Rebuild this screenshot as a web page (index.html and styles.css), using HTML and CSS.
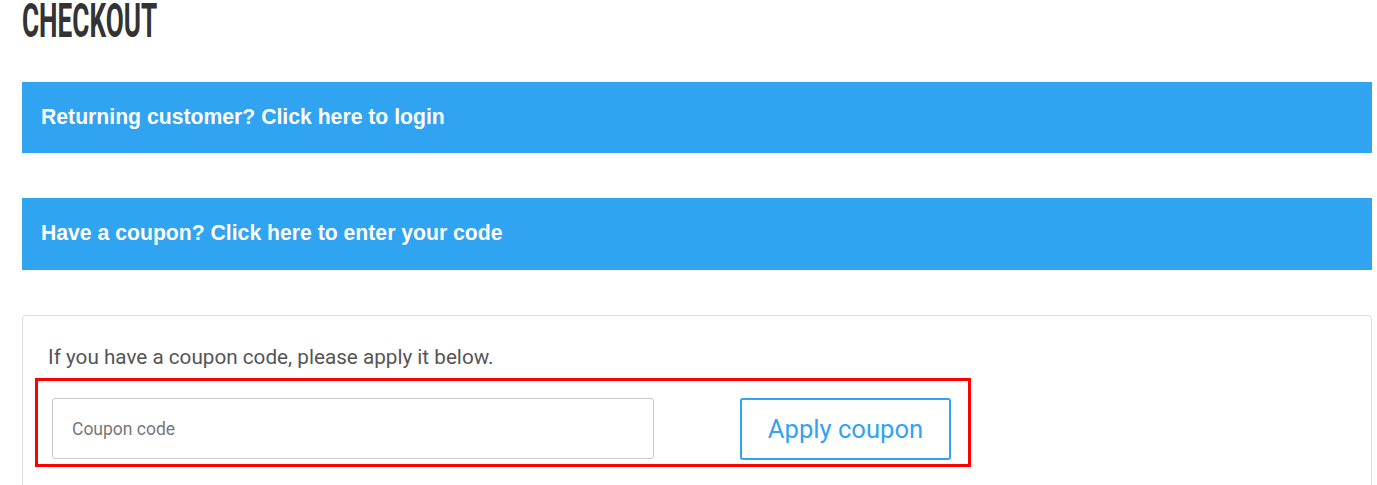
FILE: index.html
```html
<!DOCTYPE html>
<html>
<head>
<meta charset="utf-8">
<link rel="stylesheet" href="styles.css">
</head>
<body>
<div class="page">
  <div class="title-row"><h1 class="title">CHECKOUT</h1></div>
  <div class="notice">Returning customer? Click here to login</div>
  <div class="notice">Have a coupon? Click here to enter your code</div>
  <div class="coupon-box">
    <p class="hint">If you have a coupon code, please apply it below.</p>
    <div class="highlight">
      <input class="code-input" type="text" placeholder="Coupon code">
      <button class="apply-btn">Apply coupon</button>
    </div>
  </div>
</div>
</body>
</html>
```

FILE: styles.css
```css
html, body {
  margin: 0;
  padding: 0;
  background: #fff;
  overflow: hidden;
}
.page {
  width: 1350px;
  margin-left: 22px;
  font-family: "Liberation Sans", Arial, sans-serif;
}
.title-row {
  height: 82px;
}
.title {
  display: inline-block;
  margin: 0;
  font-family: Roboto, sans-serif;
  font-weight: bold;
  font-size: 48px;
  line-height: 42px;
  color: #333;
  transform: scaleX(0.545);
  transform-origin: left top;
  white-space: nowrap;
}
.notice {
  background: #30a3f1;
  color: #fff;
  font-size: 21.2px;
  font-weight: bold;
  height: 71px;
  line-height: 69px;
  padding-left: 19px;
  margin-bottom: 45px;
}
.notice + .notice {
  height: 72px;
  line-height: 70px;
}
.coupon-box {
  border: 1px solid #dcdcdc;
  border-radius: 4px;
  padding: 29px 0 30px 12px;
  height: 200px;
}
.hint {
  margin: 0 0 9px 13px;
  font-family: Roboto, sans-serif;
  font-size: 20.7px;
  line-height: 24px;
  color: #555;
}
.highlight {
  width: 936px;
  height: 89px;
  box-sizing: border-box;
  border: 3px solid #f00;
  display: flex;
  align-items: flex-start;
  padding: 17px 0 0 14px;
}
.code-input {
  width: 602px;
  height: 61px;
  box-sizing: border-box;
  border: 1px solid #c8c8c8;
  border-radius: 3px;
  padding: 0 19px;
  font-family: Roboto, sans-serif;
  font-size: 17.5px;
  color: #333;
  outline: none;
}
.code-input::placeholder {
  color: #777;
}
.apply-btn {
  margin-left: 86px;
  width: 211px;
  height: 62px;
  box-sizing: border-box;
  background: #fff;
  border: 2px solid #30a3f1;
  border-radius: 3px;
  color: #30a3f1;
  font-family: Roboto, sans-serif;
  font-size: 25.6px;
  padding: 0;
}
```
